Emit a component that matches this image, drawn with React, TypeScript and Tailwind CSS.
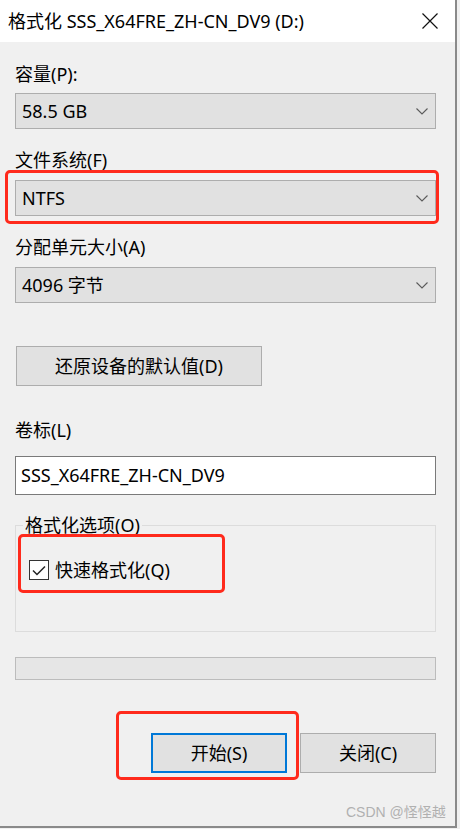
import React from "react";

const font = { fontFamily: '"Noto Sans", "Noto Sans CJK SC", sans-serif' };

function Chevron() {
  return (
    <svg width="12" height="7" viewBox="0 0 12 7" className="shrink-0">
      <path d="M0.5 0.5 L6 6 L11.5 0.5" fill="none" stroke="#5a5a5a" strokeWidth="1.1" />
    </svg>
  );
}

function Select({ value, mt }: { value: string; mt: string }) {
  return (
    <div className={`${mt} h-[36px] w-[421px] bg-[#e1e1e1] border border-[#adadad] flex items-center justify-between pl-[6px] pr-[7px]`}>
      <span className="text-[18px] leading-none text-black">{value}</span>
      <Chevron />
    </div>
  );
}

export default function App() {
  return (
    <div className="relative w-[460px] h-[829px] bg-[#f0f0f0] overflow-hidden text-black" style={font}>
      <div className="w-[457px] h-[828px] border-r-2 border-b-2 border-[#8a8a8a] bg-[#f0f0f0] flex flex-col">
        {/* title bar */}
        <div className="h-[42px] bg-white flex items-center justify-between pl-[8px] pr-[17px] shrink-0">
          <span className="text-[18px] leading-none">格式化 SSS_X64FRE_ZH-CN_DV9 (D:)</span>
          <svg width="16" height="16" viewBox="0 0 16 16">
            <path d="M0.5 0.5 L15.5 15.5 M15.5 0.5 L0.5 15.5" stroke="#111" strokeWidth="1.2" fill="none" />
          </svg>
        </div>

        <div className="pl-[15px] flex flex-col">
          <div className="mt-[20px] h-[24px] leading-[24px] text-[18px]">容量(P):</div>
          <Select value="58.5 GB" mt="mt-[7px]" />
          <div className="mt-[19px] h-[24px] leading-[24px] text-[18px]">文件系统(F)</div>
          <Select value="NTFS" mt="mt-[8px]" />
          <div className="mt-[19px] h-[24px] leading-[24px] text-[18px]">分配单元大小(A)</div>
          <Select value="4096 字节" mt="mt-[8px]" />

          <div className="mt-[43px] ml-[1px] w-[246px] h-[40px] bg-[#e1e1e1] border border-[#adadad] flex items-center justify-center text-[18px]">
            还原设备的默认值(D)
          </div>

          <div className="mt-[32px] h-[24px] leading-[24px] text-[18px]">卷标(L)</div>
          <div className="mt-[14px] w-[421px] h-[39px] bg-white border border-[#7a7a7a] flex items-center pl-[5px] text-[18px]">
            SSS_X64FRE_ZH-CN_DV9
          </div>

          {/* group box */}
          <div className="relative mt-[30px] w-[421px] h-[107px] border border-[#dcdcdc]">
            <span className="absolute left-[7px] top-[-13px] px-[2px] bg-[#f0f0f0] text-[18px] leading-[24px]">格式化选项(O)</span>
            <div className="mt-[32px] ml-[13px] flex items-center gap-[6px]">
              <div className="w-[20px] h-[20px] bg-white border border-[#333] flex items-center justify-center">
                <svg width="14" height="11" viewBox="0 0 14 11">
                  <path d="M1 5.5 L5 9.5 L13 1.5" fill="none" stroke="#222" strokeWidth="1.5" />
                </svg>
              </div>
              <span className="text-[18px] leading-[24px]">快速格式化(Q)</span>
            </div>
          </div>

          {/* progress */}
          <div className="mt-[25px] w-[421px] h-[23px] bg-[#e6e6e6] border border-[#bcbcbc]" />

          {/* buttons */}
          <div className="mt-[53px] w-[421px] flex justify-end gap-[13px]">
            <div className="w-[136px] h-[40px] bg-[#e1e1e1] border-2 border-[#0078d7] flex items-center justify-center text-[18px]">
              开始(S)
            </div>
            <div className="w-[136px] h-[40px] bg-[#e1e1e1] border border-[#adadad] flex items-center justify-center text-[18px]">
              关闭(C)
            </div>
          </div>
        </div>
      </div>

      {/* annotation boxes */}
      <div className="absolute left-[5px] top-[170px] w-[434px] h-[54px] border-[3px] border-[#ff2a1c] rounded-[5px]" />
      <div className="absolute left-[18px] top-[534px] w-[207px] h-[59px] border-[3px] border-[#ff2a1c] rounded-[5px]" />
      <div className="absolute left-[116px] top-[711px] w-[183px] h-[69px] border-[3px] border-[#ff2a1c] rounded-[5px]" />

      {/* watermark */}
      <div className="absolute left-[346px] top-[802px] text-[14px] leading-[20px] text-[#b0b0b0] whitespace-nowrap" style={{ fontFamily: '"Liberation Sans", "Noto Sans CJK SC", sans-serif' }}>
        CSDN @怪怪越
      </div>
    </div>
  );
}
